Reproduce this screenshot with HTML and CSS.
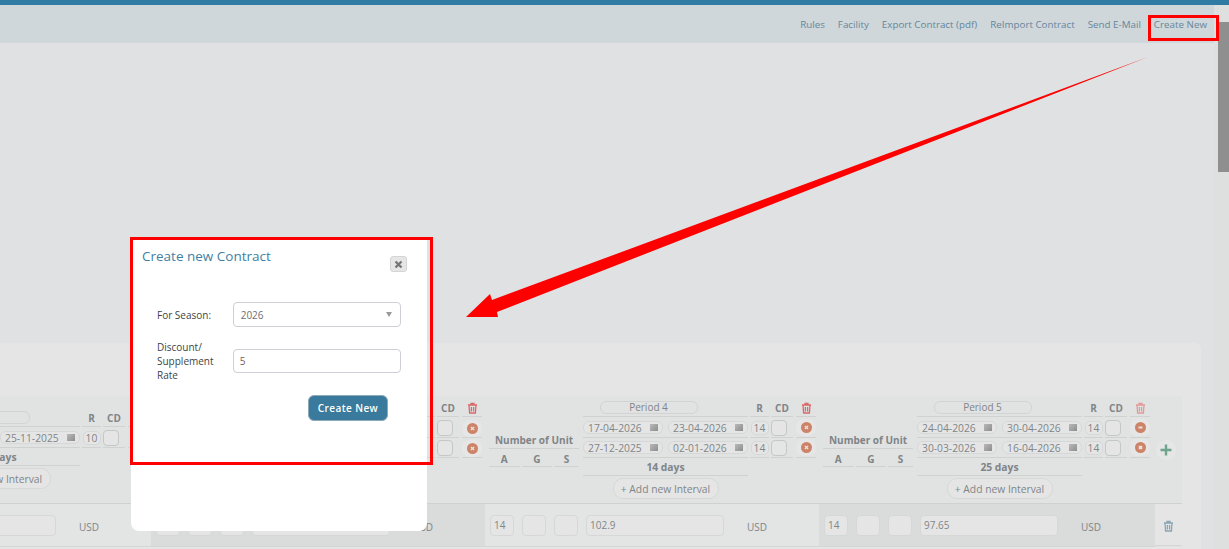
FILE: index.html
```html
<!DOCTYPE html>
<html lang="en">
<head>
    <meta charset="UTF-8">
    <title>Contracts</title>
    <link rel="stylesheet" href="styles.css">
</head>
<body>
    <div class="topLine"></div>
    <div class="page">
        <div class="content">
            <nav class="toolbar">
                <a>Rules</a>
                <a>Facility</a>
                <a>Export Contract (pdf)</a>
                <a>ReImport Contract</a>
                <a>Send E-Mail</a>
                <a>Create New</a>
            </nav>
            <div class="panel">
                <div class="periods">

                    <!-- Period 2, mostly scrolled off to the left -->
                    <div class="group">
                        <div class="groupHead">
                            <div class="units"></div>
                            <div class="period">
                                <div class="head">
                                    <div class="cell cDates"><span class="periodName"></span></div>
                                    <div class="cell cR">R</div>
                                    <div class="cell cCd">CD</div>
                                    <div class="cell cDel"></div>
                                </div>
                                <div class="line">
                                    <div class="cell cDates dates">
                                        <span class="date"></span>
                                        <span class="date">25-11-2025<span class="calIcon"></span></span>
                                    </div>
                                    <div class="cell cR"><span class="rBox">10</span></div>
                                    <div class="cell cCd"><span class="cdBox"></span></div>
                                    <div class="cell cDel"></div>
                                </div>
                                <div class="days">21 days</div>
                                <div class="addInterval"><span>+ Add new Interval</span></div>
                            </div>
                        </div>
                        <div class="groupRow">
                            <div class="rowBox"></div>
                            <div class="rowBox"></div>
                            <div class="rowBox"></div>
                            <div class="rowRate"></div>
                            <div class="rowCur">USD</div>
                        </div>
                    </div>

                    <!-- Period 3, behind the modal -->
                    <div class="group">
                        <div class="groupHead">
                            <div class="units"></div>
                            <div class="period">
                                <div class="head">
                                    <div class="cell cDates"></div>
                                    <div class="cell cR"></div>
                                    <div class="cell cCd">CD</div>
                                    <div class="cell cDel"><svg class="binIcon" width="11" height="12" viewBox="0 0 11 12"><path d="M1 3h9M4 3V1.5h3V3M2 3l.6 8h5.8L9 3M4.4 5v4.5M6.6 5v4.5"/></svg></div>
                                </div>
                                <div class="line">
                                    <div class="cell cDates"></div>
                                    <div class="cell cR"></div>
                                    <div class="cell cCd"><span class="cdBox"></span></div>
                                    <div class="cell cDel"><span class="removeWrap"><svg width="11" height="11" viewBox="0 0 11 11"><circle cx="5.5" cy="5.5" r="5.5" fill="#cc8367"/><path d="M3.9 3.9l3.2 3.2M7.1 3.9L3.9 7.1" stroke="#eadfda" stroke-width="1.4"/></svg></span></div>
                                </div>
                                <div class="line">
                                    <div class="cell cDates"></div>
                                    <div class="cell cR"></div>
                                    <div class="cell cCd"><span class="cdBox"></span></div>
                                    <div class="cell cDel"><span class="removeWrap"><svg width="11" height="11" viewBox="0 0 11 11"><circle cx="5.5" cy="5.5" r="5.5" fill="#cc8367"/><path d="M3.9 3.9l3.2 3.2M7.1 3.9L3.9 7.1" stroke="#eadfda" stroke-width="1.4"/></svg></span></div>
                                </div>
                                <div class="days"></div>
                                <div class="addInterval"></div>
                            </div>
                        </div>
                        <div class="groupRow">
                            <div class="rowBox"></div>
                            <div class="rowBox"></div>
                            <div class="rowBox"></div>
                            <div class="rowRate"></div>
                            <div class="rowCur">USD</div>
                        </div>
                    </div>

                    <!-- Period 4 -->
                    <div class="group">
                        <div class="groupHead">
                            <div class="units">
                                <div class="unitsTitle">Number of Unit</div>
                                <div class="unitsCols"><span>A</span><span>G</span><span>S</span></div>
                            </div>
                            <div class="period">
                                <div class="head">
                                    <div class="cell cDates"><span class="periodName">Period 4</span></div>
                                    <div class="cell cR">R</div>
                                    <div class="cell cCd">CD</div>
                                    <div class="cell cDel"><svg class="binIcon" width="11" height="12" viewBox="0 0 11 12"><path d="M1 3h9M4 3V1.5h3V3M2 3l.6 8h5.8L9 3M4.4 5v4.5M6.6 5v4.5"/></svg></div>
                                </div>
                                <div class="line">
                                    <div class="cell cDates dates">
                                        <span class="date">17-04-2026<span class="calIcon"></span></span>
                                        <span class="date">23-04-2026<span class="calIcon"></span></span>
                                    </div>
                                    <div class="cell cR"><span class="rBox">14</span></div>
                                    <div class="cell cCd"><span class="cdBox"></span></div>
                                    <div class="cell cDel"><span class="removeWrap"><svg width="11" height="11" viewBox="0 0 11 11"><circle cx="5.5" cy="5.5" r="5.5" fill="#cc8367"/><path d="M3.9 3.9l3.2 3.2M7.1 3.9L3.9 7.1" stroke="#eadfda" stroke-width="1.4"/></svg></span></div>
                                </div>
                                <div class="line">
                                    <div class="cell cDates dates">
                                        <span class="date">27-12-2025<span class="calIcon"></span></span>
                                        <span class="date">02-01-2026<span class="calIcon"></span></span>
                                    </div>
                                    <div class="cell cR"><span class="rBox">14</span></div>
                                    <div class="cell cCd"><span class="cdBox"></span></div>
                                    <div class="cell cDel"><span class="removeWrap"><svg width="11" height="11" viewBox="0 0 11 11"><circle cx="5.5" cy="5.5" r="5.5" fill="#cc8367"/><path d="M3.9 3.9l3.2 3.2M7.1 3.9L3.9 7.1" stroke="#eadfda" stroke-width="1.4"/></svg></span></div>
                                </div>
                                <div class="days">14 days</div>
                                <div class="addInterval"><span>+ Add new Interval</span></div>
                            </div>
                        </div>
                        <div class="groupRow">
                            <div class="rowBox">14</div>
                            <div class="rowBox"></div>
                            <div class="rowBox"></div>
                            <div class="rowRate">102.9</div>
                            <div class="rowCur">USD</div>
                        </div>
                    </div>

                    <!-- Period 5 -->
                    <div class="group">
                        <div class="groupHead">
                            <div class="units">
                                <div class="unitsTitle">Number of Unit</div>
                                <div class="unitsCols"><span>A</span><span>G</span><span>S</span></div>
                            </div>
                            <div class="period">
                                <div class="head">
                                    <div class="cell cDates"><span class="periodName">Period 5</span></div>
                                    <div class="cell cR">R</div>
                                    <div class="cell cCd">CD</div>
                                    <div class="cell cDel"><svg class="binIcon lastBin" width="11" height="12" viewBox="0 0 11 12"><path d="M1 3h9M4 3V1.5h3V3M2 3l.6 8h5.8L9 3M4.4 5v4.5M6.6 5v4.5"/></svg></div>
                                </div>
                                <div class="line">
                                    <div class="cell cDates dates">
                                        <span class="date">24-04-2026<span class="calIcon"></span></span>
                                        <span class="date">30-04-2026<span class="calIcon"></span></span>
                                    </div>
                                    <div class="cell cR"><span class="rBox">14</span></div>
                                    <div class="cell cCd"><span class="cdBox"></span></div>
                                    <div class="cell cDel"><span class="removeWrap"><svg width="11" height="11" viewBox="0 0 11 11"><circle cx="5.5" cy="5.5" r="5.5" fill="#cc8367"/><path d="M3.5 5.5h4" stroke="#eadfda" stroke-width="2"/></svg></span></div>
                                </div>
                                <div class="line">
                                    <div class="cell cDates dates">
                                        <span class="date">30-03-2026<span class="calIcon"></span></span>
                                        <span class="date">16-04-2026<span class="calIcon"></span></span>
                                    </div>
                                    <div class="cell cR"><span class="rBox">14</span></div>
                                    <div class="cell cCd"><span class="cdBox"></span></div>
                                    <div class="cell cDel"><span class="removeWrap"><svg width="11" height="11" viewBox="0 0 11 11"><circle cx="5.5" cy="5.5" r="5.5" fill="#cc8367"/><rect x="3.75" y="3.75" width="3.5" height="3.5" fill="#eadfda"/></svg></span></div>
                                </div>
                                <div class="days">25 days</div>
                                <div class="addInterval"><span>+ Add new Interval</span></div>
                            </div>
                        </div>
                        <div class="groupRow">
                            <div class="rowBox">14</div>
                            <div class="rowBox"></div>
                            <div class="rowBox"></div>
                            <div class="rowRate">97.65</div>
                            <div class="rowCur">USD</div>
                        </div>
                    </div>

                    <div class="rowEnd">
                        <div class="plusCell">
                            <span class="plusWrap"><svg width="12" height="12" viewBox="0 0 12 12"><path d="M6 .5v11M.5 6h11" stroke="#6fa58c" stroke-width="2.4"/></svg></span>
                        </div>
                        <div class="binCell"><svg class="rowBin" width="11" height="12" viewBox="0 0 11 12"><path d="M1 3h9M4 3V1.5h3V3M2 3l.6 8h5.8L9 3M4.4 5v4.5M6.6 5v4.5"/></svg></div>
                    </div>
                </div>
            </div>
        </div>
        <div class="scrollbar"><div class="thumb"></div></div>
    </div>

    <div class="modal">
        <h2>Create new Contract</h2>
        <button class="closeBtn">
            <svg width="9" height="9" viewBox="0 0 9 9"><path d="M1.5 1.5l6 6M7.5 1.5l-6 6" stroke="#777" stroke-width="2.4"/></svg>
        </button>
        <div class="formRow firstRow">
            <label>For Season:</label>
            <div class="selectBox">2026<span class="caret"></span></div>
        </div>
        <div class="formRow">
            <label>Discount/<br>Supplement<br>Rate</label>
            <input class="rateInput" type="text" value="5">
        </div>
        <div class="formActions"><button class="createBtn">Create New</button></div>
    </div>

    <div class="markBox markLink"></div>
    <div class="markBox markModal"></div>
    <svg class="arrow" width="1229" height="549" viewBox="0 0 1229 549">
        <polygon points="1148,57 497,312 498,317 466,317 490,294 492,300" fill="#ff0000"/>
    </svg>
</body>
</html>
```
FILE: styles.css
```css
html, body {
    margin: 0;
    padding: 0;
    height: 549px;
    overflow: hidden;
}

body {
    font-family: "Open Sans", sans-serif;
    font-size: 10px;
    color: #7f8588;
    background-color: #dfe1e2;
}

.topLine {
    height: 5px;
    background-color: #2f7ba3;
}

.page {
    display: flex;
    height: 544px;
}

.content {
    flex: 1;
    min-width: 0;
}

.scrollbar {
    width: 11px;
    padding: 17px 0 0 4px;
    background-color: #dedfdf;
}

.thumb {
    height: 150px;
    background-color: #8f8f8f;
}

.toolbar {
    display: flex;
    justify-content: flex-end;
    gap: 13px;
    height: 38px;
    padding-right: 7px;
    align-items: center;
    font-size: 9.8px;
    background-color: #cfd7da;
    color: #66869c;
}

.panel {
    margin-top: 300px;
    width: 1201px;
    height: 206px;
    padding-top: 53px;
    box-sizing: border-box;
    overflow: hidden;
    background-color: #e5e5e5;
    border-radius: 0 6px 0 0;
}

.periods {
    display: flex;
    margin-left: -183px;
    width: 1365px;
    background-color: #e1e2e2;
}

.group {
    width: 334px;
    flex: none;
}

.group:nth-child(4) {
    width: 336px;
}

.groupHead {
    display: flex;
    height: 108px;
    padding-left: 4px;
    box-sizing: border-box;
    border-bottom: 1px solid #cfd0d0;
}

.units {
    width: 90px;
    padding-top: 37px;
    font-weight: 700;
    text-align: center;
}

.unitsTitle {
    height: 15px;
    line-height: 15px;
    border-bottom: 1px solid #d0d2d2;
}

.unitsCols {
    display: flex;
    gap: 2px;
}

.unitsCols span {
    flex: 1;
    height: 14px;
    padding-top: 3px;
    line-height: 14px;
    border-bottom: 1px solid #d0d2d2;
}

.unitsCols span:last-child {
    flex: 0 0 25px;
}

.period {
    display: flex;
    flex-direction: column;
    justify-content: center;
    width: 236px;
    margin-left: 4px;
}

.head, .line {
    display: flex;
}

.head {
    margin-bottom: 1px;
}

.cell {
    display: flex;
    align-items: center;
    justify-content: center;
    height: 18px;
    padding-top: 1px;
    border-bottom: 1px solid #d0d2d2;
    margin-right: 2px;
}

.head .cell {
    height: 16px;
    padding-top: 4px;
    font-weight: 700;
}

.cDates {
    width: 165px;
}

.cR {
    width: 19px;
}

.cCd {
    width: 22px;
    margin-right: 3px;
    justify-content: flex-start;
}

.head .cCd {
    justify-content: center;
}

.cDel {
    width: 20px;
    margin-right: 0;
}

.periodName {
    width: 96px;
    height: 11px;
    line-height: 11px;
    margin-right: 34px;
    font-weight: 400;
    text-align: center;
    border: 1px solid #d2d4d4;
    border-radius: 6px;
}

.dates {
    justify-content: space-between;
}

.date {
    display: flex;
    justify-content: space-between;
    align-items: center;
    width: 70px;
    height: 11px;
    padding: 0 4px;
    font-size: 10.3px;
    border: 1px solid #d6d8d8;
    border-radius: 6px;
    background-color: #e5e5e5;
}

.calIcon {
    width: 8px;
    height: 7px;
    background: linear-gradient(135deg, #b9b9b9, #8d8d8d);
}

.rBox {
    width: 16px;
    height: 12px;
    line-height: 13px;
    font-size: 10.3px;
    text-align: center;
    border: 1px solid #d6d8d8;
    border-radius: 5px;
    background-color: #e5e5e5;
}

.cdBox {
    width: 14px;
    height: 14px;
    border: 1px solid #c4c7c7;
    border-radius: 4px;
    background-color: #e5e5e5;
}

.binIcon, .rowBin {
    fill: none;
    stroke-width: 1.3;
}

.binIcon {
    stroke: #d96a6a;
}

.lastBin {
    stroke: #e39a9a;
}

.rowBin {
    stroke: #8aa6b5;
}

.removeWrap {
    display: flex;
    align-items: center;
    justify-content: center;
    width: 20px;
    height: 17px;
    border-radius: 8px;
    background-color: #e6e6e6;
}

.days {
    width: 165px;
    height: 16px;
    padding-top: 1px;
    line-height: 17px;
    font-size: 10.3px;
    text-align: center;
    font-weight: 700;
    border-bottom: 1px solid #d0d2d2;
}

.addInterval {
    display: flex;
    justify-content: center;
    width: 165px;
    min-height: 21px;
    padding: 2px 0 5px;
}

.addInterval span {
    width: 104px;
    height: 19px;
    line-height: 20px;
    font-size: 10.3px;
    text-align: center;
    border: 1px solid #d6d8d8;
    border-radius: 10px;
    background-color: #e5e5e5;
}

.groupRow {
    display: flex;
    align-items: center;
    height: 41px;
    padding: 1px 0 0 5px;
    border-bottom: 1px solid #d4d5d5;
    background-color: #e3e4e4;
}

.group:nth-child(even) .groupRow {
    background-color: #dadbdb;
}

.rowBox {
    width: 24px;
    height: 21px;
    line-height: 19px;
    padding-left: 3px;
    box-sizing: border-box;
    margin-right: 8px;
    border: 1px solid #d6d8d8;
    border-radius: 4px;
    background-color: #e5e5e5;
}

.rowRate {
    width: 138px;
    height: 21px;
    line-height: 19px;
    padding-left: 3px;
    box-sizing: border-box;
    border: 1px solid #d6d8d8;
    border-radius: 4px;
    background-color: #e5e5e5;
}

.rowCur {
    margin-left: 23px;
    padding-top: 2px;
}

.rowEnd {
    flex: none;
    width: 27px;
}

.plusCell {
    height: 108px;
    box-sizing: border-box;
    padding: 44px 0 0 1px;
    border-bottom: 1px solid #cfd0d0;
}

.plusWrap {
    display: flex;
    align-items: center;
    justify-content: center;
    width: 20px;
    height: 20px;
    border-radius: 50%;
    background-color: #e6e6e6;
}

.binCell {
    display: flex;
    justify-content: center;
    padding-top: 16px;
    box-sizing: border-box;
    height: 42px;
    border-bottom: 1px solid #d4d5d5;
    background-color: #e5e5e5;
}

/* modal on top of the page */
.modal {
    position: absolute;
    left: 131px;
    top: 237px;
    width: 296px;
    height: 294px;
    box-sizing: border-box;
    padding: 0 26px;
    background-color: #fff;
    border-radius: 0 0 8px 8px;
    color: #3c4448;
}

.modal h2 {
    margin: 11px 0 0 -15px;
    font-size: 13.5px;
    line-height: 17px;
    font-weight: 400;
    color: #3f7fa3;
}

.closeBtn {
    position: absolute;
    left: 259px;
    top: 19px;
    display: flex;
    align-items: center;
    justify-content: center;
    width: 17px;
    height: 16px;
    padding: 0;
    border: 1px solid #d5d5d5;
    border-radius: 3px;
    background-color: #e6e6e6;
}

.formRow {
    display: flex;
    align-items: center;
    margin-top: 13px;
}

.firstRow {
    margin-top: 37px;
}

.formRow label {
    width: 76px;
    line-height: 14px;
}

.selectBox {
    display: flex;
    justify-content: space-between;
    align-items: center;
    width: 169px;
    height: 25px;
    padding: 0 8px 0 7px;
    box-sizing: border-box;
    border: 1px solid #cfcfd6;
    border-radius: 4px;
    color: #6f6f6f;
}

.caret {
    width: 0;
    height: 0;
    border-left: 3px solid transparent;
    border-right: 3px solid transparent;
    border-top: 5px solid #999;
}

.rateInput {
    width: 169px;
    height: 24px;
    padding: 0 6px;
    box-sizing: border-box;
    font-family: inherit;
    font-size: 10px;
    color: #7a5a5a;
    border: 1px solid #cfcfd6;
    border-radius: 4px;
}

.formActions {
    display: flex;
    justify-content: flex-end;
    margin: 13px 13px 0 0;
}

.createBtn {
    width: 80px;
    height: 26px;
    padding: 0;
    font-family: inherit;
    font-size: 10px;
    font-weight: 600;
    letter-spacing: 0.4px;
    color: #fff;
    border: 1px solid #8fa9b8;
    border-radius: 6px;
    background-color: #3a7a9c;
}

/* red annotations */
.markBox {
    position: absolute;
    box-sizing: border-box;
    border: 3px solid #ff0000;
}

.markLink {
    left: 1148px;
    top: 15px;
    width: 71px;
    height: 26px;
}

.markModal {
    left: 130px;
    top: 237px;
    width: 303px;
    height: 228px;
}

.arrow {
    position: absolute;
    left: 0;
    top: 0;
    pointer-events: none;
}
```
